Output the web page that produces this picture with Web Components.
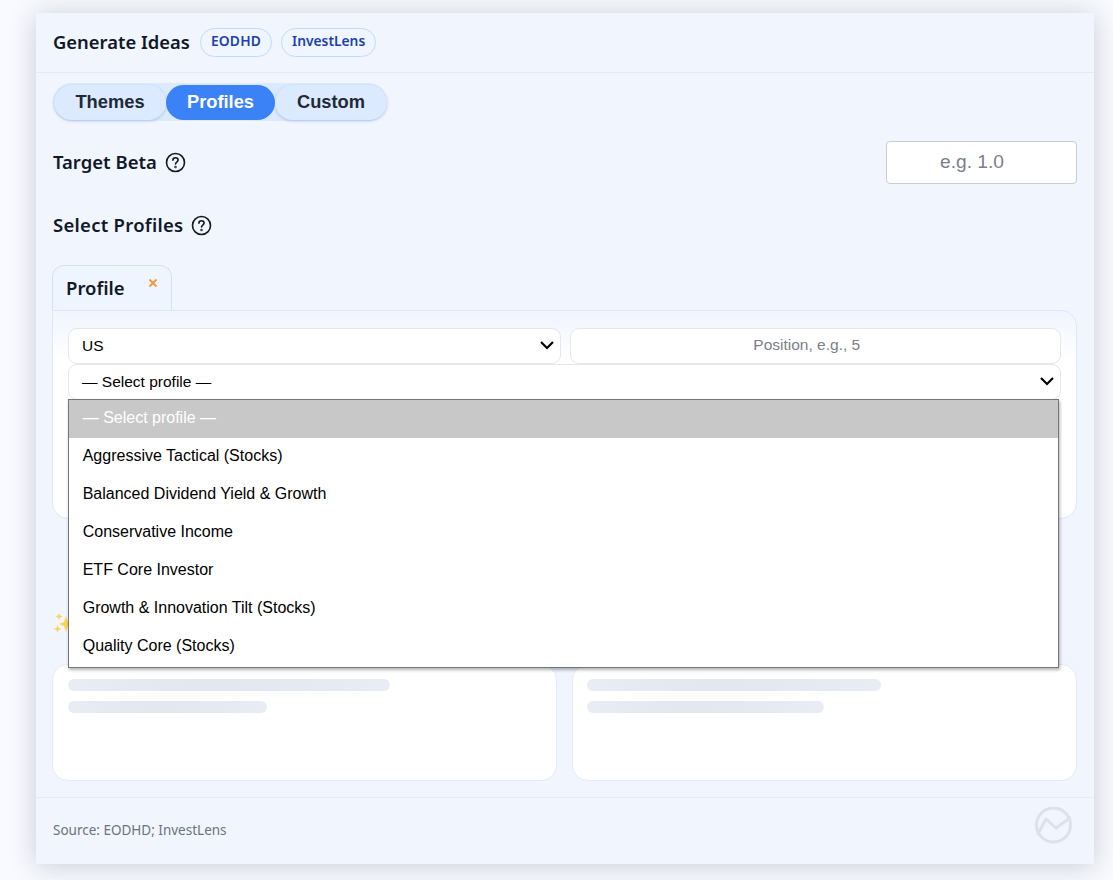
<!DOCTYPE html>
<html>
<head>
<meta charset="utf-8">
<style>
  html, body { margin: 0; height: 880px; overflow: hidden; background: #f8faff; }
  body { padding: 13px 19px 0 36px; box-sizing: border-box; font-family: "Noto Sans", sans-serif; color: #111827; }
</style>
</head>
<body>
<ideas-card></ideas-card>
<script>
  // small pill next to the title
  class SourceBadge extends HTMLElement {
    constructor() {
      super();
      this.attachShadow({ mode: 'open' });
      this.shadowRoot.innerHTML = `
        <style>
          :host {
            display: inline-flex;
            align-items: center;
            box-sizing: border-box;
            height: 29px;
            padding: 0 10px 4px;
            border: 1px solid #bfdbfe;
            border-radius: 15px;
            background: #eff6ff;
            font: 600 13.8px "Noto Sans", sans-serif;
            color: #1e40af;
          }
        </style>
        <slot></slot>
      `;
    }
  }

  class TabSwitch extends HTMLElement {
    constructor() {
      super();
      this.attachShadow({ mode: 'open' });
      this.shadowRoot.innerHTML = `
        <style>
          :host {
            display: inline-flex;
            height: 38px;
            border-radius: 19px;
            background: #dbeafe;
            font: 700 18.3px "Liberation Sans", sans-serif;
            color: #1f2937;
          }
          .tab {
            display: flex;
            align-items: center;
            justify-content: center;
            box-sizing: border-box;
            height: 35px;
            padding-bottom: 2px;
            border-radius: 18px;
            margin-top: 2px;
            background: #dbeafe;
            box-shadow: 0 1px 3px rgba(30, 64, 175, 0.25);
          }
          .themes { width: 112px; margin-left: 1px; }
          .profiles { width: 109px; background: #3b82f6; color: #fff; box-shadow: none; }
          .custom { width: 112px; }
        </style>
        <div class="tab themes">Themes</div>
        <div class="tab profiles">Profiles</div>
        <div class="tab custom">Custom</div>
      `;
    }
  }

  class HelpLabel extends HTMLElement {
    constructor() {
      super();
      this.attachShadow({ mode: 'open' });
      this.shadowRoot.innerHTML = `
        <style>
          :host {
            display: inline-flex;
            align-items: center;
            gap: 8px;
            font: 600 18.5px "Noto Sans", sans-serif;
            color: #111827;
          }
          .txt { margin-top: -2px; }
          svg { width: 21px; height: 21px; display: block; }
        </style>
        <span class="txt"><slot></slot></span>
        <svg viewBox="0 0 21 21" fill="none" stroke="#111827" stroke-width="1.6" stroke-linecap="round">
          <circle cx="10.500" cy="10.500" r="9"/>
          <path d="M7.900 8.300c0-1.500 1.200-2.500 2.600-2.500s2.600 1 2.600 2.300c0 1.900-2.600 2-2.600 3.900"/>
          <circle cx="10.500" cy="15" r=".4"/>
        </svg>
      `;
    }
  }

  // closed-look select box, the chevron is drawn in the box
  class SelectBox extends HTMLElement {
    constructor() {
      super();
      this.attachShadow({ mode: 'open' });
      this.shadowRoot.innerHTML = `
        <style>
          :host {
            display: flex;
            align-items: center;
            justify-content: space-between;
            box-sizing: border-box;
            height: 36px;
            padding: 0 5px 1px 13px;
            border: 1px solid #e5e7eb;
            border-radius: 9px;
            background: #fff;
            font: 15.5px "Liberation Sans", sans-serif;
            color: #000;
          }
          svg { width: 16px; height: 16px; display: block; margin-bottom: 1px; }
        </style>
        <slot></slot>
        <svg viewBox="0 0 16 16" fill="none" stroke="#000" stroke-width="2.2">
          <path d="M2 5l6 6 6-6"/>
        </svg>
      `;
    }
  }

  // native select popup, sits over the panel and the title under it
  class SelectMenu extends HTMLElement {
    constructor() {
      super();
      this.attachShadow({ mode: 'open' });
      this.shadowRoot.innerHTML = `
        <style>
          :host {
            position: absolute;
            left: 32px;
            top: 386px;
            width: 991px;
            box-sizing: border-box;
            padding-bottom: 1px;
            border: 1px solid #767676;
            background: #fff;
            box-shadow: 1px 2px 3px rgba(0, 0, 0, 0.3);
            font: 16px "Liberation Sans", sans-serif;
            color: #000;
          }
          .opt {
            box-sizing: border-box;
            height: 38px;
            display: flex;
            align-items: center;
            padding: 0 0 3px 13.7px;
          }
          .opt.on { background: #c8c8c8; color: #fff; }
        </style>
        <div class="opt on">— Select profile —</div>
        <div class="opt">Aggressive Tactical (Stocks)</div>
        <div class="opt">Balanced Dividend Yield &amp; Growth</div>
        <div class="opt">Conservative Income</div>
        <div class="opt">ETF Core Investor</div>
        <div class="opt">Growth &amp; Innovation Tilt (Stocks)</div>
        <div class="opt">Quality Core (Stocks)</div>
      `;
    }
  }

  class SkeletonCard extends HTMLElement {
    constructor() {
      super();
      this.attachShadow({ mode: 'open' });
      this.shadowRoot.innerHTML = `
        <style>
          :host {
            display: flex;
            flex-direction: column;
            gap: 10px;
            box-sizing: border-box;
            height: 117px;
            padding: 14px 15px 13px var(--pad, 15px);
            border: 1px solid #e5eaf3;
            border-radius: 16px;
            background: #fff;
          }
          .bar {
            height: 12px;
            border-radius: 6px;
            background: linear-gradient(90deg, #e8edf4, #e2e7f0 45%, #e8edf4);
          }
        </style>
        <div class="bar" style="width: var(--w1)"></div>
        <div class="bar" style="width: var(--w2)"></div>
      `;
    }
  }

  class IdeasCard extends HTMLElement {
    constructor() {
      super();
      this.attachShadow({ mode: 'open' });
      this.shadowRoot.innerHTML = `
        <style>
          :host {
            display: block;
            position: relative;
            box-sizing: border-box;
            width: 1058px;
            height: 851px;
            background: #f0f5fe;
            box-shadow: 0 2px 26px rgba(15, 23, 42, 0.2);
          }
          header {
            display: flex;
            align-items: center;
            gap: 10px;
            box-sizing: border-box;
            height: 60px;
            padding: 0 17px 2px;
            border-bottom: 1px solid #e5ebf5;
          }
          h2 { margin: 0; font: 600 18.4px "Noto Sans", sans-serif; color: #111827; }
          .badges { display: flex; gap: 9px; margin-top: 2px; }
          .tabs { padding: 10px 17px 0; height: 38px; }
          .beta {
            display: flex;
            justify-content: space-between;
            align-items: center;
            margin-top: 20px;
            padding: 0 17px 0 17px;
            height: 43px;
          }
          .beta-input {
            display: flex;
            align-items: center;
            justify-content: center;
            box-sizing: border-box;
            width: 191px;
            height: 43px;
            padding: 0 19px 2px 0;
            border: 1px solid #c9ccd3;
            border-radius: 4px;
            background: #fff;
            font: 19.2px "Liberation Sans", sans-serif;
            color: #7b7f87;
          }
          .select-label { padding: 25px 17px 0; height: 32px; display: flex; align-items: center; }
          .profile-tab {
            display: flex;
            box-sizing: border-box;
            width: 120px;
            height: 45px;
            margin: 24px 0 0 16px;
            padding: 9px 0 0 13px;
            border: 1px solid #cfe2fb;
            border-bottom: 0;
            border-radius: 12px 12px 0 0;
            background: #eff5ff;
            font: 600 18.5px "Noto Sans", sans-serif;
            color: #111827;
            position: relative;
          }
          .close { position: absolute; left: 95px; top: 12px; }
          .panel {
            box-sizing: border-box;
            height: 209px;
            margin: 0 17px 0 16px;
            padding: 17px 15px;
            border: 1px solid #dbe8fc;
            border-radius: 0 16px 16px 16px;
            background: linear-gradient(#f0f5fe, #fff 50px);
          }
          .row { display: flex; gap: 9px; }
          .row select-box { flex: 1 1 0; min-width: 0; }
          .pos {
            flex: 1 1 0;
            min-width: 0;
            display: flex;
            align-items: center;
            justify-content: center;
            box-sizing: border-box;
            height: 36px;
            padding: 0 17px 3px 0;
            border: 1px solid #e5e7eb;
            border-radius: 9px;
            background: #fff;
            font: 15.5px "Liberation Sans", sans-serif;
            color: #7b7f87;
          }
          .spark { margin: 94px 0 0 17px; height: 21px; }
          .spark svg { width: 20px; height: 21px; display: block; }
          .cards {
            display: grid;
            grid-template-columns: 505px 505px;
            gap: 15px;
            margin: 30px 17px 0 16px;
          }
          footer {
            position: absolute;
            left: 0; right: 0; bottom: 0;
            box-sizing: border-box;
            height: 67px;
            padding: 0 21px 2px 17px;
            display: flex;
            align-items: center;
            justify-content: space-between;
            border-top: 1px solid #e5ebf5;
            font: 13.500px "Noto Sans", sans-serif;
            color: #6b7280;
          }
          footer svg { width: 38px; height: 38px; display: block; margin-top: -9px; }
        </style>
        <header>
          <h2>Generate Ideas</h2>
          <div class="badges">
            <source-badge style="letter-spacing: .2px">EODHD</source-badge>
            <source-badge>InvestLens</source-badge>
          </div>
        </header>
        <div class="tabs"><tab-switch></tab-switch></div>
        <div class="beta">
          <help-label>Target Beta</help-label>
          <div class="beta-input">e.g. 1.0</div>
        </div>
        <div class="select-label"><help-label style="letter-spacing: .27px">Select Profiles</help-label></div>
        <div class="profile-tab">Profile
          <svg class="close" width="10" height="10" viewBox="0 0 10 10" stroke="#fb923c" stroke-width="1.8"><path d="M1.500 1.500l7 7M8.500 1.500l-7 7"/></svg>
        </div>
        <div class="panel">
          <div class="row">
            <select-box>US</select-box>
            <div class="pos">Position, e.g., 5</div>
          </div>
          <select-box>— Select profile —</select-box>
        </div>
        <div class="spark">
          <svg viewBox="0 0 20 21" fill="#fcd34d">
            <path d="M13 3l2 6 5 2-5 2-2 6-2-6-5-2 5-2z"/>
            <path d="M6 0l1 2.500 2.500 1-2.500 1L6 7 5 4.500l-2.500-1 2.500-1z"/>
            <path d="M4.500 12l1 3 3 1-3 1-1 3-1-3-3-1 3-1z"/>
          </svg>
        </div>
        <div class="cards">
          <skeleton-card style="--w1: 322px; --w2: 199px"></skeleton-card>
          <skeleton-card style="--w1: 294px; --w2: 237px; --pad: 14px"></skeleton-card>
        </div>
        <select-menu></select-menu>
        <footer>
          <span>Source: EODHD; InvestLens</span>
          <svg viewBox="0 0 38 38" fill="none" stroke="#dce1ea" stroke-width="3" stroke-linejoin="round" stroke-linecap="round">
            <circle cx="18.500" cy="18" r="17"/>
            <path d="M3 27l8-15 10 9 14-10"/>
          </svg>
        </footer>
      `;
    }
  }

  customElements.define('source-badge', SourceBadge);
  customElements.define('tab-switch', TabSwitch);
  customElements.define('help-label', HelpLabel);
  customElements.define('select-box', SelectBox);
  customElements.define('select-menu', SelectMenu);
  customElements.define('skeleton-card', SkeletonCard);
  customElements.define('ideas-card', IdeasCard);
</script>
</body>
</html>
